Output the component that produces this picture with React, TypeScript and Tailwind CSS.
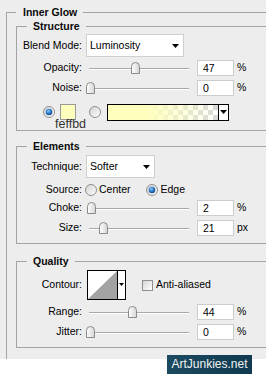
import React from "react";

const LBL = "w-[65px] shrink-0 text-right mr-[4px] text-black whitespace-nowrap";

function Thumb() {
  return (
    <svg width="9" height="12" viewBox="0 0 9 12">
      <defs>
        <linearGradient id="tg" x1="0" x2="1" y1="0" y2="0">
          <stop offset="0" stopColor="#ffffff" />
          <stop offset="1" stopColor="#d6d6d6" />
        </linearGradient>
      </defs>
      <path d="M0.5 11.5 V4.5 Q0.5 0.5 4.5 0.5 Q8.5 0.5 8.5 4.5 V11.5 Z" fill="url(#tg)" stroke="#8a8a8a" />
    </svg>
  );
}

function Slider({ left }: { left: number }) {
  return (
    <div className="relative w-[106px] h-[20px] shrink-0">
      <div className="absolute left-[3px] w-[100px] top-[10px] h-px bg-[#a8a8a8]" />
      <div className="absolute left-[3px] w-[100px] top-[11px] h-px bg-white" />
      <div className="absolute top-[4px] flex" style={{ left }}>
        <Thumb />
      </div>
    </div>
  );
}

function Arrow() {
  return (
    <svg width="7" height="4" viewBox="0 0 7 4">
      <polygon points="0,0 7,0 3.5,4" fill="#000" />
    </svg>
  );
}

function ValueBox({ v, unit }: { v: string; unit: string }) {
  return (
    <>
      <div className="ml-[5px] w-[37px] h-[16px] shrink-0 border border-[#cdcdcd] bg-white pl-[5px] leading-[14px] text-black">
        {v}
      </div>
      <div className="ml-[3px] text-black">{unit}</div>
    </>
  );
}

function SliderRow({ label, left, v, unit }: { label: string; left: number; v: string; unit: string }) {
  return (
    <div className="flex items-center h-[20px]">
      <div className={LBL}>{label}</div>
      <Slider left={left} />
      <ValueBox v={v} unit={unit} />
    </div>
  );
}

function Radio({ on }: { on: boolean }) {
  return (
    <svg width="12" height="12" viewBox="0 0 12 12" className="shrink-0">
      <defs>
        <linearGradient id="rg" x1="0" y1="0" x2="1" y2="1">
          <stop offset="0" stopColor="#d2d2d2" />
          <stop offset="1" stopColor="#ffffff" />
        </linearGradient>
        <radialGradient id="bd" cx="0.4" cy="0.35" r="0.7">
          <stop offset="0" stopColor="#8fc6f5" />
          <stop offset="0.5" stopColor="#2f7fd0" />
          <stop offset="1" stopColor="#123f7a" />
        </radialGradient>
      </defs>
      <circle cx="6" cy="6" r="5.5" fill="url(#rg)" stroke="#8f8f8f" strokeWidth="1" />
      {on && <circle cx="6" cy="6" r="3.3" fill="url(#bd)" />}
    </svg>
  );
}

function Dropdown({ cls, text }: { cls: string; text: string }) {
  return (
    <div className={`flex items-center justify-between h-[23px] border border-[#cfcfcf] bg-white pl-[3px] pr-[4px] shrink-0 ${cls}`}>
      <span className="text-black">{text}</span>
      <Arrow />
    </div>
  );
}

function Legend({ children }: { children: React.ReactNode }) {
  return (
    <legend className="ml-[10px] pl-[6px] pr-[6px] h-[14px] leading-[14px] text-[10.5px] font-bold text-[#0a0a0a]">
      {children}
    </legend>
  );
}

export default function App() {
  return (
    <div className="relative w-[266px] h-[387px] bg-white overflow-hidden font-['Liberation_Sans',Arial,sans-serif] text-[10.5px]">
      <div className="h-[359px] bg-[#ededed] pt-[5px] pl-[6px] overflow-hidden">
        <fieldset className="border-t border-l border-[#a3a3a3] pl-[9px] min-h-[354px]">
          <legend className="pl-[7px] pr-[6px] h-[14px] leading-[14px] text-[10.5px] font-bold text-[#0a0a0a]">
            Inner Glow
          </legend>

          {/* Structure */}
          <fieldset className="border-t border-l border-b border-[#a3a3a3] pb-[10px]">
            <Legend>Structure</Legend>
            <div className="pt-[1px] flex items-center">
              <div className={LBL}>Blend Mode:</div>
              <Dropdown cls="w-[98px]" text="Luminosity" />
            </div>
            <div className="mt-[1px]">
              <SliderRow label="Opacity:" left={45} v="47" unit="%" />
              <SliderRow label="Noise:" left={0} v="0" unit="%" />
            </div>
            <div className="mt-[6px] flex items-center h-[16px] pl-[26px]">
              <Radio on={true} />
              <div className="relative ml-[5px] w-[16px] h-[16px] border border-[#9a9a9a] bg-[#feffbd] shrink-0">
                <span className="absolute left-[-6px] top-[13px] text-[12.5px] leading-[13px] text-[#333333]">feffbd</span>
              </div>
              <div className="ml-[13px]">
                <Radio on={false} />
              </div>
              <div className="ml-[6px] flex h-[17px] w-[122px] border border-black bg-white shrink-0">
                <div className="w-[110px] h-full bg-[image:repeating-conic-gradient(#d8d8d8_0%_25%,#ffffff_0%_50%)] bg-[length:10px_10px]">
                  <div className="w-full h-full bg-[image:linear-gradient(to_right,#feffbd_0%,#feffbd_35%,rgba(254,255,189,0)_100%)]" />
                </div>
                <div className="w-px h-full bg-black" />
                <div className="flex-1 flex items-center justify-center">
                  <Arrow />
                </div>
              </div>
            </div>
          </fieldset>

          {/* Elements */}
          <fieldset className="mt-[8px] border-t border-l border-b border-[#a3a3a3] pb-[5px]">
            <Legend>Elements</Legend>
            <div className="pt-[2px] flex items-center">
              <div className={LBL}>Technique:</div>
              <Dropdown cls="w-[69px]" text="Softer" />
            </div>
            <div className="mt-[3px] h-[17px] flex items-center">
              <div className="w-[65px] shrink-0 text-right mr-[3px] text-black">Source:</div>
              <Radio on={false} />
              <span className="ml-[2px] text-black">Center</span>
              <div className="ml-[15px]">
                <Radio on={true} />
              </div>
              <span className="ml-[3px] text-black">Edge</span>
            </div>
            <SliderRow label="Choke:" left={1} v="2" unit="%" />
            <SliderRow label="Size:" left={13} v="21" unit="px" />
          </fieldset>

          {/* Quality */}
          <fieldset className="mt-[10px] border-t border-l border-b border-[#a3a3a3] pb-[5px]">
            <Legend>Quality</Legend>
            <div className="mt-[2px] h-[30px] flex items-center">
              <div className={LBL}>Contour:</div>
              <svg width="39" height="30" viewBox="0 0 39 30" className="ml-[1px] shrink-0">
                <rect x="0.5" y="0.5" width="38" height="29" fill="#ffffff" stroke="#000" />
                <polygon points="1,29 30,1 30,29" fill="#a3a3a3" />
                <line x1="30.5" y1="0.5" x2="30.5" y2="29.5" stroke="#000" />
                <polygon points="32,13 37,13 34.5,16" fill="#000" />
              </svg>
              <div className="ml-[16px] w-[11px] h-[11px] border border-[#8f8f8f] bg-[image:linear-gradient(135deg,#d4d4d4,#ffffff)] shrink-0" />
              <span className="ml-[3px] text-black">Anti-aliased</span>
            </div>
            <div className="mt-[2px]">
              <SliderRow label="Range:" left={42} v="44" unit="%" />
              <SliderRow label="Jitter:" left={0} v="0" unit="%" />
            </div>
          </fieldset>
        </fieldset>
      </div>

      <div className="absolute left-[167px] top-[355px] w-[85px] h-[19px] bg-[image:linear-gradient(to_right,#1c4a60,#0f3a50)] flex items-center justify-center text-[#f2f2f2] text-[12px] leading-[19px]">
        ArtJunkies.net
      </div>
    </div>
  );
}
